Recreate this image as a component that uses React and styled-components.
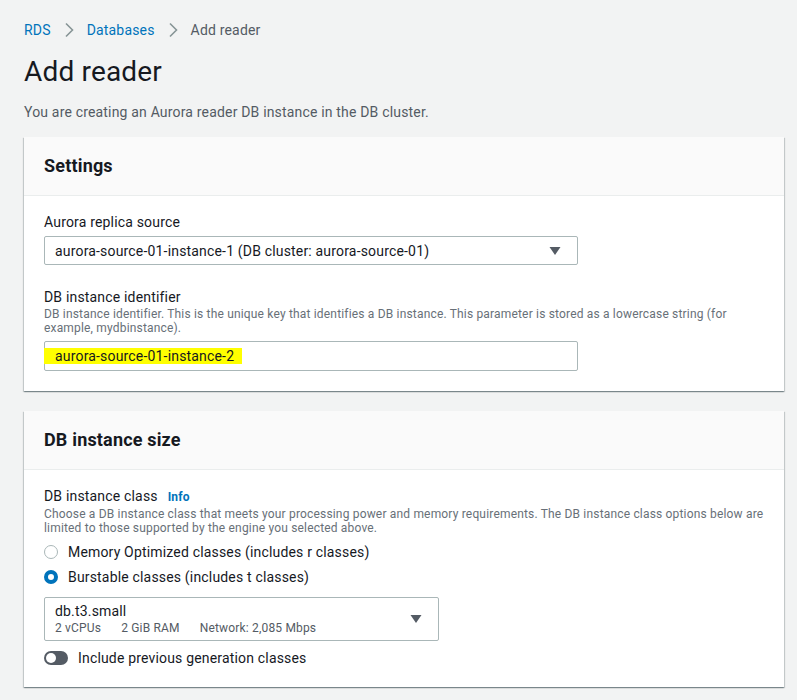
import React from 'react';
import styled, { createGlobalStyle } from 'styled-components';

const GlobalStyle = createGlobalStyle`
	* {
		box-sizing: border-box;
	}
	body {
		margin: 0;
		background: #f2f3f3;
		font-family: Roboto, "Noto Sans", "Liberation Sans", sans-serif;
		letter-spacing: 0.011em;
		color: #16191f;
	}
`;

const Page = styled.div`
	padding: 20px 13px 12px 24px;
	width: 797px;
`;

const Breadcrumbs = styled.nav`
	display: flex;
	align-items: center;
	gap: 13px;
	font-size: 14px;
	line-height: 20px;
	height: 20px;
`;

const Crumb = styled.span`
	color: ${(p) => (p.current ? '#545b64' : '#0073bb')};
`;

const Chevron = styled.svg`
	width: 10px;
	height: 16px;
`;

const Title = styled.h1`
	margin: 14px 0 0;
	font-size: 28px;
	line-height: 36px;
	font-weight: 400;
	color: #16191f;
`;

const Subtitle = styled.p`
	margin: 12px 0 0;
	font-size: 14px;
	line-height: 20px;
	color: #545b64;
`;

const Card = styled.section`
	background: #fff;
	margin-top: ${(p) => p.top}px;
	box-shadow: 0 1px 1px 0 rgba(0, 28, 36, 0.3), 1px 1px 1px 0 rgba(0, 28, 36, 0.15),
		-1px 1px 1px 0 rgba(0, 28, 36, 0.15);
`;

const CardHeader = styled.header`
	background: #fafafa;
	border-bottom: 1px solid #eaeded;
	height: 59px;
	padding: 0 20px;
	display: flex;
	align-items: center;
	h2 {
		margin: 0;
		font-size: 18px;
		font-weight: 700;
		line-height: 22px;
	}
`;

const CardBody = styled.div`
	padding: ${(p) => p.pad || '16px 20px 20px'};
	display: flex;
	flex-direction: column;
`;

const Field = styled.div`
	display: flex;
	flex-direction: column;
	margin-top: ${(p) => p.top || 0}px;
`;

const Label = styled.div`
	font-size: 14px;
	line-height: 20px;
	color: #16191f;
	display: flex;
	align-items: baseline;
	gap: 10px;
`;

const InfoLink = styled.span`
	font-size: 12px;
	font-weight: 700;
	color: #0073bb;
`;

const Description = styled.div`
	font-size: 12px;
	line-height: 14px;
	color: #687078;
	margin-bottom: 6px;
`;

const SelectBox = styled.div`
	margin-top: ${(p) => p.top || 4}px;
	width: ${(p) => p.width}px;
	height: ${(p) => p.height || 29}px;
	border: 1px solid #aab7b8;
	border-radius: 2px;
	background: #fff;
	padding: 0 16px 0 10px;
	display: flex;
	align-items: center;
	justify-content: space-between;
	font-size: 14px;
	color: #16191f;
`;

const Caret = styled.svg`
	width: 12px;
	height: 10px;
	flex-shrink: 0;
`;

const InputBox = styled.div`
	width: 534px;
	height: 30px;
	border: 1px solid #aab7b8;
	border-radius: 2px;
	background: #fff;
	display: flex;
	align-items: center;
	font-size: 14px;
`;

const Highlight = styled.span`
	background: #ffff00;
	padding: 0 8px 0 11px;
	line-height: 16px;
	margin-left: -1px;
`;

const RadioGroup = styled.div`
	display: flex;
	flex-direction: column;
	gap: 5px;
	margin-top: 1px;
`;

const RadioRow = styled.label`
	display: flex;
	align-items: center;
	gap: 10px;
	font-size: 14px;
	line-height: 20px;
	color: #16191f;
`;

const RadioDot = styled.span`
	width: 14px;
	height: 14px;
	border-radius: 50%;
	border: ${(p) => (p.checked ? '4px solid #0073bb' : '1px solid #aab7b8')};
	background: #fff;
	flex-shrink: 0;
`;

const SizeText = styled.div`
	display: flex;
	flex-direction: column;
	gap: 1px;
`;

const SizeName = styled.span`
	font-size: 14px;
	line-height: 17px;
`;

const SizeSpecs = styled.span`
	display: flex;
	gap: 20px;
	font-size: 12px;
	line-height: 14px;
	color: #545b64;
`;

const ToggleRow = styled.label`
	display: flex;
	align-items: center;
	gap: 10px;
	margin-top: 7px;
	font-size: 14px;
	line-height: 20px;
`;

const Toggle = styled.span`
	width: 24px;
	height: 14px;
	border-radius: 7px;
	background: #545b64;
	display: flex;
	align-items: center;
	padding-left: 2px;
	&::after {
		content: '';
		width: 10px;
		height: 10px;
		border-radius: 50%;
		background: #fff;
	}
`;

const ChevronIcon = () => (
	<Chevron viewBox="0 0 10 16">
		<path d="M2 1.5 L8.5 8 L2 14.5" fill="none" stroke="#879596" strokeWidth="1.6" />
	</Chevron>
);

const CaretIcon = () => (
	<Caret viewBox="0 0 12 10">
		<path d="M0.5 1 H11.5 L6 9 Z" fill="#545b64" />
	</Caret>
);

const App = () => {
	return (
		<>
			<GlobalStyle />
			<Page>
				<Breadcrumbs>
					<Crumb>RDS</Crumb>
					<ChevronIcon />
					<Crumb>Databases</Crumb>
					<ChevronIcon />
					<Crumb current>Add reader</Crumb>
				</Breadcrumbs>
				<Title>Add reader</Title>
				<Subtitle>You are creating an Aurora reader DB instance in the DB cluster.</Subtitle>

				<Card top={15}>
					<CardHeader>
						<h2>Settings</h2>
					</CardHeader>
					<CardBody>
						<Field>
							<Label>Aurora replica source</Label>
							<SelectBox width={534}>
								<span>aurora-source-01-instance-1 (DB cluster: aurora-source-01)</span>
								<CaretIcon />
							</SelectBox>
						</Field>
						<Field top={22}>
							<Label>DB instance identifier</Label>
							<Description>
								DB instance identifier. This is the unique key that identifies a DB instance. This parameter is stored as
								a lowercase string (for example, mydbinstance).
							</Description>
							<InputBox>
								<Highlight>aurora-source-01-instance-2</Highlight>
							</InputBox>
						</Field>
					</CardBody>
				</Card>

				<Card top={20}>
					<CardHeader>
						<h2>DB instance size</h2>
					</CardHeader>
					<CardBody pad="16px 20px 19px">
						<Field>
							<Label>
								DB instance class <InfoLink>Info</InfoLink>
							</Label>
							<Description>
								Choose a DB instance class that meets your processing power and memory requirements. The DB instance class
								options below are limited to those supported by the engine you selected above.
							</Description>
							<RadioGroup>
								<RadioRow>
									<RadioDot />
									Memory Optimized classes (includes r classes)
								</RadioRow>
								<RadioRow>
									<RadioDot checked />
									Burstable classes (includes t classes)
								</RadioRow>
							</RadioGroup>
							<SelectBox width={395} height={44} top={10}>
								<SizeText>
									<SizeName>db.t3.small</SizeName>
									<SizeSpecs>
										<span>2 vCPUs</span>
										<span>2 GiB RAM</span>
										<span>Network: 2,085 Mbps</span>
									</SizeSpecs>
								</SizeText>
								<CaretIcon />
							</SelectBox>
							<ToggleRow>
								<Toggle />
								Include previous generation classes
							</ToggleRow>
						</Field>
					</CardBody>
				</Card>
			</Page>
		</>
	);
};

export default App;
